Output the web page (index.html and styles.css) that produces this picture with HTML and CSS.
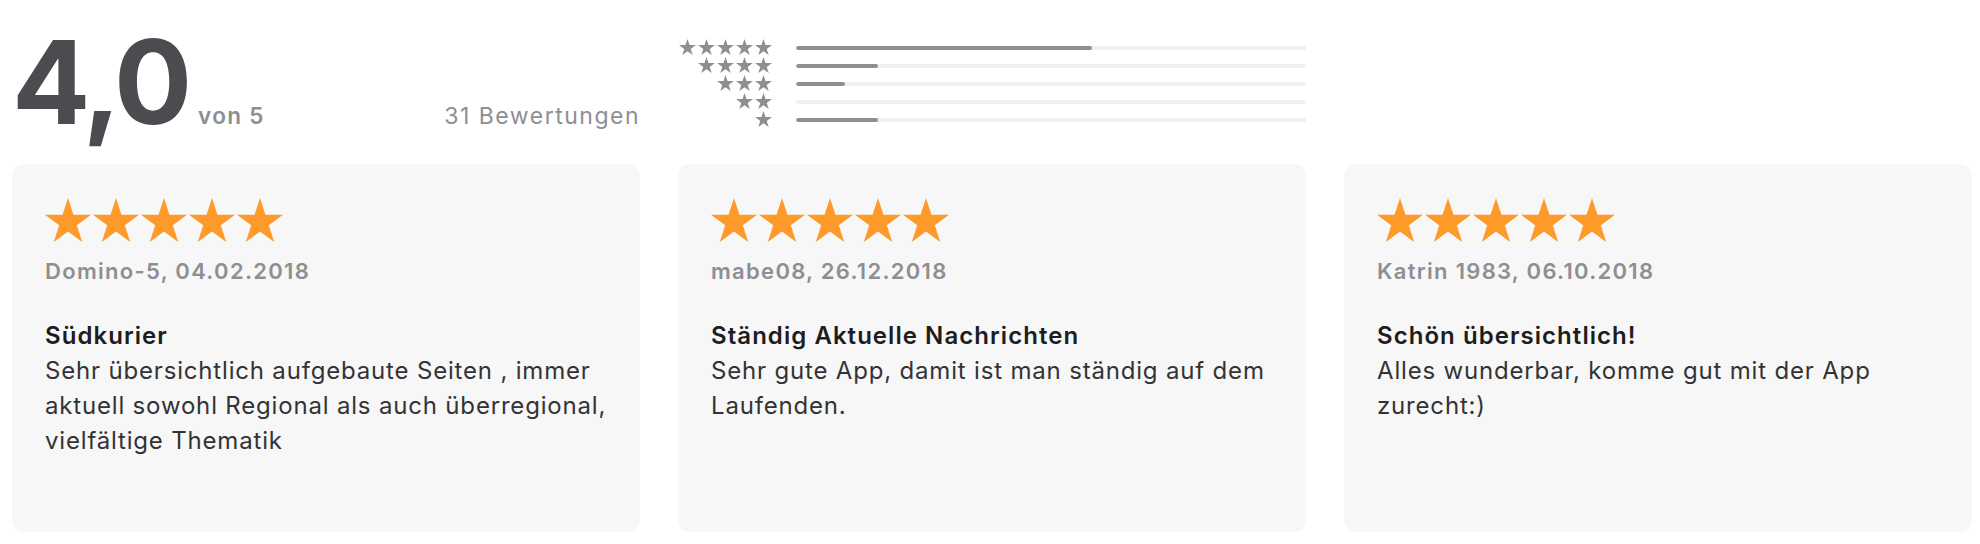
FILE: index.html
```html
<!DOCTYPE html>
<html lang="de">
<head>
<meta charset="utf-8">
<title>Bewertungen</title>
<link rel="stylesheet" href="styles.css">
</head>
<body>
<svg width="0" height="0" class="defs" aria-hidden="true">
  <defs>
    <symbol id="star" viewBox="0 0 100 95.15">
      <polygon points="50,0 61.81,36.35 100,36.35 69.11,58.81 80.92,95.15 50,72.69 19.08,95.15 30.89,58.81 0,36.35 38.19,36.35"/>
    </symbol>
  </defs>
</svg>
<main class="page">
  <section class="summary">
    <div class="averages">
      <div class="avg">
        <span class="avg-value">4,0</span>
        <span class="avg-of">von 5</span>
      </div>
      <span class="count">31 Bewertungen</span>
    </div>
    <div class="histogram">
      <div class="hist-row">
        <span class="hist-stars"><svg class="hstar"><use href="#star"/></svg><svg class="hstar"><use href="#star"/></svg><svg class="hstar"><use href="#star"/></svg><svg class="hstar"><use href="#star"/></svg><svg class="hstar"><use href="#star"/></svg></span>
        <span class="bar"><span class="bar-fill" style="width:58.06%"></span></span>
      </div>
      <div class="hist-row">
        <span class="hist-stars"><svg class="hstar"><use href="#star"/></svg><svg class="hstar"><use href="#star"/></svg><svg class="hstar"><use href="#star"/></svg><svg class="hstar"><use href="#star"/></svg></span>
        <span class="bar"><span class="bar-fill" style="width:16.13%"></span></span>
      </div>
      <div class="hist-row">
        <span class="hist-stars"><svg class="hstar"><use href="#star"/></svg><svg class="hstar"><use href="#star"/></svg><svg class="hstar"><use href="#star"/></svg></span>
        <span class="bar"><span class="bar-fill" style="width:9.68%"></span></span>
      </div>
      <div class="hist-row">
        <span class="hist-stars"><svg class="hstar"><use href="#star"/></svg><svg class="hstar"><use href="#star"/></svg></span>
        <span class="bar"><span class="bar-fill" style="width:0%"></span></span>
      </div>
      <div class="hist-row">
        <span class="hist-stars"><svg class="hstar"><use href="#star"/></svg></span>
        <span class="bar"><span class="bar-fill" style="width:16.13%"></span></span>
      </div>
    </div>
  </section>

  <section class="reviews">
    <article class="card">
      <div class="stars"><svg class="cstar"><use href="#star"/></svg><svg class="cstar"><use href="#star"/></svg><svg class="cstar"><use href="#star"/></svg><svg class="cstar"><use href="#star"/></svg><svg class="cstar"><use href="#star"/></svg></div>
      <p class="meta">Domino-5, 04.02.2018</p>
      <h3 class="title">Südkurier</h3>
      <p class="body">Sehr übersichtlich aufgebaute Seiten , immer aktuell sowohl Regional als auch überregional, vielfältige Thematik</p>
    </article>
    <article class="card">
      <div class="stars"><svg class="cstar"><use href="#star"/></svg><svg class="cstar"><use href="#star"/></svg><svg class="cstar"><use href="#star"/></svg><svg class="cstar"><use href="#star"/></svg><svg class="cstar"><use href="#star"/></svg></div>
      <p class="meta">mabe08, 26.12.2018</p>
      <h3 class="title">Ständig Aktuelle Nachrichten</h3>
      <p class="body">Sehr gute App, damit ist man ständig auf dem Laufenden.</p>
    </article>
    <article class="card">
      <div class="stars"><svg class="cstar"><use href="#star"/></svg><svg class="cstar"><use href="#star"/></svg><svg class="cstar"><use href="#star"/></svg><svg class="cstar"><use href="#star"/></svg><svg class="cstar"><use href="#star"/></svg></div>
      <p class="meta">Katrin 1983, 06.10.2018</p>
      <h3 class="title">Schön übersichtlich!</h3>
      <p class="body">Alles wunderbar, komme gut mit der App zurecht:)</p>
    </article>
  </section>
</main>
</body>
</html>
```
FILE: styles.css
```css
* { box-sizing: border-box; }

html, body {
  margin: 0;
  padding: 0;
  background: #ffffff;
}

body {
  font-family: Inter, "Noto Sans", "Liberation Sans", sans-serif;
  color: #1d1d1f;
}

.defs {
  position: absolute;
  width: 0;
  height: 0;
  overflow: hidden;
}

.page {
  width: 1980px;
  padding: 0 8px 0 12px;
}

.summary {
  display: grid;
  grid-template-columns: repeat(3, 628px);
  column-gap: 38px;
  height: 164px;
}

.averages {
  display: flex;
  justify-content: space-between;
  align-items: baseline;
  padding-top: 24px;
}

.avg {
  display: flex;
  align-items: baseline;
}

.avg-value {
  font-size: 116px;
  line-height: 116px;
  font-weight: 700;
  letter-spacing: -4px;
  color: #4b4b50;
}

.avg-of {
  margin-left: 10px;
  font-size: 22.5px;
  font-weight: 600;
  letter-spacing: 1.3px;
  color: #8e8e93;
}

.count {
  font-size: 23px;
  font-weight: 400;
  letter-spacing: 1.5px;
  color: #8e8e93;
}

.histogram {
  padding-top: 39px;
  display: flex;
  flex-direction: column;
}

.hist-row {
  display: grid;
  grid-template-columns: 94px 510px;
  column-gap: 24px;
  height: 18px;
  align-items: center;
}

.hist-stars {
  display: flex;
  justify-content: flex-end;
  gap: 2px;
  margin-top: -3px;
}

.hstar {
  width: 17px;
  height: 16px;
  fill: #8e8e93;
}

.bar {
  display: block;
  height: 4px;
  border-radius: 2px;
  background: #efeff4;
  overflow: hidden;
}

.bar-fill {
  display: block;
  height: 4px;
  border-radius: 2px;
  background: #8e8e93;
}

.reviews {
  display: grid;
  grid-template-columns: repeat(3, 628px);
  column-gap: 38px;
}

.card {
  height: 368px;
  background: #f7f7f7;
  border-radius: 12px;
  padding: 34px 28px 0 33px;
}

.stars {
  display: flex;
  gap: 2px;
  height: 44px;
}

.cstar {
  width: 46px;
  height: 44px;
  fill: #fd9a2a;
}

.meta {
  margin: 14px 0 0;
  font-size: 22px;
  line-height: 30px;
  font-weight: 600;
  letter-spacing: 1.3px;
  color: #8e8e93;
}

.title {
  margin: 32px 0 0;
  font-size: 24px;
  line-height: 35px;
  font-weight: 600;
  letter-spacing: 1.05px;
  color: #1d1d1f;
}

.body {
  margin: 0;
  font-size: 24px;
  line-height: 35px;
  font-weight: 400;
  letter-spacing: 0.82px;
  color: #333336;
}
```
